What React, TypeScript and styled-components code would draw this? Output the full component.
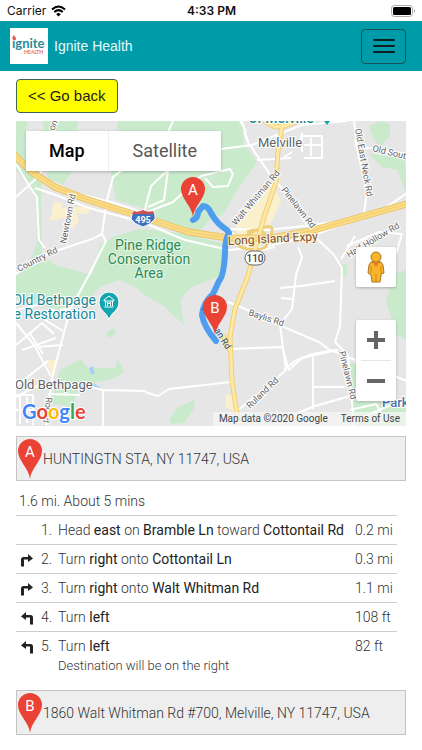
import React from "react";
import styled, { createGlobalStyle } from "styled-components";

const GlobalStyle = createGlobalStyle`
  *, *::before, *::after { box-sizing: border-box; }
  body {
    margin: 0;
    background: #fff;
    color: #333;
    font-family: Roboto, "Noto Sans", sans-serif;
  }
`;

const StatusBar = styled.div`
  display: grid;
  grid-template-columns: 1fr auto 1fr;
  align-items: center;
  height: 21px;
  padding: 0 6px 0 7px;
  color: #111;
  font: 12px/20px Inter, sans-serif;
`;

const Carrier = styled.span`
  display: flex;
  align-items: center;
  gap: 5px;
`;

const Clock = styled.span`
  font-weight: 600;
`;

const Battery = styled.svg`
  justify-self: end;
`;

const Header = styled.header`
  display: flex;
  align-items: center;
  gap: 6px;
  height: 50px;
  padding: 0 16px 0 10px;
  background: #009ba9;
`;

const Brand = styled.a`
  flex: 1;
  display: flex;
  align-items: center;
  gap: 6px;
  color: #e8fbfc;
  font: 14px/20px "Liberation Sans", sans-serif;
  text-decoration: none;
`;

const MenuButton = styled.button`
  display: grid;
  place-items: center;
  width: 45px;
  height: 35px;
  padding: 0;
  border: 1px solid #17525a;
  border-radius: 4px;
  background: transparent;
  cursor: pointer;
`;

const Main = styled.main`
  padding: 8px 16px;
`;

const BackButton = styled.button`
  display: block;
  height: 34px;
  padding: 0 11px;
  border: 1px solid #3f6650;
  border-radius: 4px;
  background: #ff0;
  color: #1c1c1c;
  font: 15px/20px "Liberation Sans", sans-serif;
  cursor: pointer;
`;

const MapFrame = styled.section`
  position: relative;
  height: 305px;
  margin: 8px 0 10px;
  overflow: hidden;
  background: #e6e6e6;
`;

const MapCanvas = styled.svg`
  display: block;
  width: 100%;
  height: 100%;
  font-family: Roboto, sans-serif;
`;

const MapTypes = styled.div`
  position: absolute;
  top: 10px;
  left: 10px;
  display: flex;
  height: 40px;
  background: #fff;
  box-shadow: 0 1px 3px rgba(0, 0, 0, 0.25);
`;

const MapType = styled.button<{ $active?: boolean }>`
  padding: ${(p) => (p.$active ? "0 23px" : "0 24px")};
  border: 0;
  border-left: ${(p) => (p.$active ? "0" : "1px solid #eee")};
  background: transparent;
  color: ${(p) => (p.$active ? "#000" : "#565656")};
  font: ${(p) => (p.$active ? 500 : 400)} 18px/20px Roboto, sans-serif;
  cursor: pointer;
`;

const MapControls = styled.div`
  position: absolute;
  right: 10px;
  bottom: 25px;
  display: flex;
  flex-direction: column;
  gap: 33px;
`;

const ControlGroup = styled.div`
  display: flex;
  flex-direction: column;
  align-items: center;
  width: 40px;
  border-radius: 2px;
  background: #fff;
  box-shadow: 0 1px 3px rgba(0, 0, 0, 0.25);
`;

const ControlButton = styled.button`
  display: grid;
  place-items: center;
  width: 40px;
  height: 40px;
  padding: 0;
  border: 0;
  background: transparent;
  cursor: pointer;
`;

const ControlDivider = styled.span`
  width: 30px;
  height: 1px;
  background: #e6e6e6;
`;

const Attribution = styled.div`
  position: absolute;
  right: 0;
  bottom: 0;
  display: flex;
  gap: 13px;
  padding: 0 6px;
  background: rgba(245, 245, 245, 0.75);
  color: #444;
  font-size: 10px;
  line-height: 14px;
`;

const TermsLink = styled.a`
  color: inherit;
  text-decoration: none;
`;

const Waypoint = styled.div`
  display: flex;
  align-items: center;
  height: 45px;
  border: 1px solid #c4c4c4;
  background: #eee;
  font-size: 14px;
  font-weight: 300;
  line-height: 20px;
`;

const Summary = styled.p`
  margin: 10px 3px 4px;
  font-size: 14px;
  font-weight: 300;
  line-height: 20px;
`;

const Steps = styled.table`
  width: calc(100% - 9px);
  margin-bottom: 10px;
  border-collapse: collapse;
  table-layout: fixed;
  font-size: 14px;
  font-weight: 300;
  line-height: 20px;
`;

const StepRow = styled.tr`
  border-top: 1px solid #cdcdcd;
`;

const Cell = styled.td<{ $width?: number }>`
  width: ${(p) => (p.$width ? `${p.$width}px` : "auto")};
  padding: 4px 0;
  vertical-align: top;
  white-space: nowrap;
`;

const TurnCell = styled(Cell)`
  padding: 9px 0 0 4px;
  line-height: 0;
`;

const Strong = styled.b`
  font-weight: 400;
  color: #222;
`;

const Note = styled.div`
  font-size: 13px;
  line-height: 20px;
`;

function Logo() {
  return (
    <svg width="38" height="36" viewBox="0 0 38 36" role="img" aria-label="Ignite Health logo">
      <rect width="38" height="36" fill="#fff" />
      <text x="2" y="20" fontFamily="Lato, sans-serif" fontWeight="700" fontSize="13" fill="#2b8b98">ıgnite</text>
      <path d="M4.500 12.500C1.500 11.500 2 9.500 4 7c.3 1.200 1.400 1.400 1.800 3 .6 1.400-.3 2.300-1.300 2.500z" fill="#e6594d" />
      <text x="14" y="26" fontFamily="Lato, sans-serif" fontWeight="700" fontSize="5" fill="#e07167">HEALTH</text>
    </svg>
  );
}

function PinShape({ letter }: { letter: string }) {
  return (
    <>
      <path d="M13 41C12 30 1 23 1 13a12 12 0 0 1 24 0c0 10-11 17-12 28z" fill="#ea4335" />
      <text x="13" y="19" textAnchor="middle" fontSize="15" fontWeight="400" fill="#fff">{letter}</text>
    </>
  );
}

function WaypointPin({ letter }: { letter: string }) {
  return (
    <svg width="26" height="42" viewBox="0 0 26 42" aria-hidden="true">
      <PinShape letter={letter} />
    </svg>
  );
}

function TurnIcon({ left }: { left?: boolean }) {
  return (
    <svg width="14" height="13" viewBox="0 0 14 13" aria-hidden="true">
      <g transform={left ? "translate(14 0) scale(-1 1)" : undefined}>
        <path d="M1 12.500V5.500Q1 3 3.500 3H8V0l5 4.500L8 8V5.500H4v7z" fill="#222" />
      </g>
    </svg>
  );
}

const parks = [
  "M16 121H28L24 144 29 165 42 178 41 200 42 255 55 265 92 275 100 245 112 237 140 229 180 233 225 244 222 275 207 281 190 288 180 300 184 325 165 307 145 295 132 285 118 280 100 287 86 302 65 311 16 300V275L33 255 39 235 37 195 16 170Z",
  "M43 121H78L75 152 71 173 63 185 48 178Z",
  "M111 172 118 121H242L244 144 257 162 244 181 234 195 222 216 214 215 200 231 161 221 148 210 116 200Z",
  "M60 370 81 359 88 368 115 368 118 359 124 372 112 379 80 386 72 407 50 403Z",
  "M369 126 380 121 390 124 390 136 380 147 373 138Z",
  "M369 154 405 158 407 195 397 170 382 167Z",
  "M407 270 394 274 386 302 397 335 407 340Z",
  "M345 364H357V402H407V426H354Z",
  "M169 420 178 407 194 400 195 407 184 423 171 424Z",
  "M106 333 113 328 117 333 109 338Z",
  "M342 264H347V276H342Z",
];

const minorRoads = [
  "M16 197 39 176 61 131",
  "M16 164 30 187 37 197 39 240 45 248",
  "M16 274 50 253 92 239 102 234 107 200 113 177 125 168",
  "M102 234 106 241 91 271 70 310 52 378 46 426",
  "M35 188 53 194 89 208 142 222 185 240 229 250 263 247 308 237 347 223 381 211 407 193",
  "M53 183 75 193 111 202 145 213 173 202 201 176 230 169 233 174 228 186 213 187 205 178",
  "M173 121 168 132 M144 213 151 186 168 170 164 200 148 207",
  "M221 149 252 145 302 125 347 121",
  "M250 145 271 176 291 199 312 234 334 255 342 268 340 326 335 342 348 355 354 426",
  "M244 132 249 145 242 121 M240 121 246 131",
  "M257 160 291 158 M287 144H301V136H322V158H304 M302 133V152 M311 138V156 M304 145H322 M284 157 292 152",
  "M354 121 357 148 378 148 407 157",
  "M355 140 367 191 364 213",
  "M229 229 267 230 304 226 350 220",
  "M230 232 240 238 254 252 275 247",
  "M298 247 302 257 296 275 292 309 280 325 286 370 265 389 234 413",
  "M228 302 255 313 286 328 319 342 331 351 338 350",
  "M232 349 282 347 289 370 302 358 333 351 407 381",
  "M284 370 295 361 312 354 335 350",
  "M145 392 158 396 169 389 231 382",
  "M280 288 301 286 335 281 M281 298 293 299",
  "M16 323 34 345 51 376 M16 386 48 361 M16 397 45 382",
  "M16 345 42 323 54 334 M22 350 56 338 M29 332 43 354 M37 347 63 345",
  "M37 315 63 331 M52 309 68 320 M60 310 71 308 M16 310 46 303",
  "M16 395H33V425 M20 395V424 M27 397V423 M16 410H33 M48 394 80 395",
  "M87 386 103 390 145 391 M103 390V426",
  "M313 357V409 M313 387H345 M280 420 315 406 350 396",
  "M350 410 376 404 382 414 M358 419 393 404 407 402",
  "M355 236 341 259 M347 246 379 232 402 234 396 254",
];

const mapLabels = [
  { text: "on", x: 54, y: 131, rotate: -67, size: 9 },
  { text: "Melville", x: 258, y: 147, size: 13 },
  { text: "Newtown Rd", x: 66, y: 244, rotate: -79, size: 9 },
  { text: "Country Rd", x: 19, y: 272, rotate: -27, size: 9 },
  { text: "Walt Whitman Rd", x: 236, y: 226, rotate: -50, size: 9 },
  { text: "Pinelawn Rd", x: 281, y: 190, rotate: 52, size: 9 },
  { text: "Old East Neck Rd", x: 355, y: 129, rotate: 80, size: 9 },
  { text: "Old South", x: 372, y: 151, rotate: 14, size: 9 },
  { text: "Half Hollow Rd", x: 349, y: 258, rotate: -31, size: 9 },
  { text: "Baylis Rd", x: 248, y: 315, rotate: 18, size: 9 },
  { text: "Ruland Rd", x: 250, y: 409, rotate: -44, size: 9 },
  { text: "Pinelawn Rd", x: 339, y: 352, rotate: 76, size: 9 },
  { text: "Old Bethpage", x: 15, y: 389, size: 13 },
  { text: "Round Swamp", x: 46, y: 397, rotate: 96, size: 9 },
];

function RouteMap() {
  return (
    <MapCanvas viewBox="16 121 390 305" preserveAspectRatio="xMidYMid slice" role="img" aria-label="Route map">
      <rect x="-200" y="-100" width="900" height="750" fill="#e6e6e6" />
      <g fill="#c9ebcc">
        {parks.map((d) => <path key={d} d={d} />)}
      </g>
      <g fill="#fbf0ce">
        <path d="M54 201 63 204 61 208 91 206 88 214 77 213 79 221 72 229 64 218 50 221Z" />
        <path d="M45 360H56L54 378Z M226 394 238 399 238 414 225 407Z" />
        <path d="M272 181 244 211 236 225 237 238 260 239 272 221 281 201Z" />
      </g>
      <g fill="#a8cef8">
        <path d="M89 368 93 366 95 374 91 374Z M93 383 101 388 93 388Z" />
      </g>
      <g fill="none" stroke="#fff" strokeWidth="2" strokeLinejoin="round">
        {minorRoads.map((d) => <path key={d} d={d} />)}
      </g>
      <g fill="none" stroke="#efcf75" strokeWidth="5">
        <path d="M264 121 275 127 285 126 298 121" />
        <path d="M283 121 278 151 276 182 264 217 257 242 248 276 235 309 230 337 232 381 239 426" />
        <path d="M247 232Q264 226 267 239T248 249 253 232 269 240" strokeWidth="3" />
        <path d="M223 335 232 355" />
      </g>
      <g fill="none" stroke="#fde9a5" strokeWidth="3">
        <path d="M264 121 275 127 285 126 298 121" />
        <path d="M283 121 278 151 276 182 264 217 257 242 248 276 235 309 230 337 232 381 239 426" />
        <path d="M223 335 232 355" />
      </g>
      <g fill="none">
        <path d="M13 154 33 173 55 187 80 197 110 207 143 217 189 232 228 238 271 238 310 231 350 220 410 203" stroke="#eac368" strokeWidth="7" />
        <path d="M13 154 33 173 55 187 80 197 110 207 143 217 189 232 228 238 271 238 310 231 350 220 410 203" stroke="#fbdc85" strokeWidth="5" />
        <path d="M13 154 33 173 55 187 80 197 110 207 143 217 189 232 228 238 271 238 310 231 350 220 410 203" stroke="#f2cc70" />
      </g>
      <path d="M193 220Q198 218 198 212L203 206Q208 206 211 213 217 224 227 230L229 233Q225 240 225 252 224 276 219 281L213 294Q203 303 202 315 204 327 216 341" fill="none" stroke="#4f9def" strokeWidth="6" strokeLinejoin="round" strokeLinecap="round" />
      <g fill="#5f6368" stroke="#fff" strokeWidth="2" paintOrder="stroke">
        {mapLabels.map((l) => (
          <text key={`${l.text}-${l.x}`} fontSize={l.size} transform={`translate(${l.x} ${l.y}) rotate(${l.rotate ?? 0})`}>{l.text}</text>
        ))}
      </g>
      <text fontSize="9" fill="#24578f" transform="translate(201 308) rotate(59)">Whitman Rd</text>
      <g fill="#2e8955" stroke="#e3f5e5" strokeWidth="2" paintOrder="stroke" fontSize="14" textAnchor="middle">
        <text x="148" y="250">Pine Ridge</text>
        <text x="149" y="264">Conservation</text>
        <text x="149" y="278">Area</text>
      </g>
      <g fill="#188895" stroke="#fff" strokeWidth="2" paintOrder="stroke" fontSize="14">
        <text x="96" y="305" textAnchor="end">Old Bethpage</text>
        <text x="96" y="319" textAnchor="end">Village Restoration</text>
        <text x="249" y="123" fontWeight="500">of Melville</text>
      </g>
      <path d="M109 320C107 312 99 311 99 302a10 10 0 0 1 20 0c0 9-8 10-10 18z" fill="#12a4af" stroke="#fff" strokeWidth="1" />
      <path d="M104 300 109 296 114 300V301H104ZM104.500 307H113.500M105.500 301V306M112.500 301V306M107.500 306V302L109 304 110.500 302V306" fill="none" stroke="#fff" strokeWidth="1" />
      <path d="M324 121 327 125 330 121Z" fill="#12a4af" />
      <text fontSize="12" fill="#7a4c2c" stroke="#fff5d4" strokeWidth="2" paintOrder="stroke" transform="translate(228 245) rotate(-3)">Long Island Expy</text>
      <rect x="245" y="251" width="20" height="14" rx="7" fill="#fff" stroke="#666" />
      <text x="255" y="262" textAnchor="middle" fontSize="10" fontWeight="500" fill="#444">110</text>
      <path d="M134 211Q138 213 143 210 148 213 153 211 156 215 155 219 152 224 143 227 134 224 131 219 131 215 134 211Z" fill="#3d70bd" stroke="#fff" />
      <path d="M134 211Q138 213 143 210 148 213 153 211L154 214H132Z" fill="#cf4d4d" />
      <text x="143" y="223" textAnchor="middle" fontSize="9" fontWeight="700" fill="#fff">495</text>
      <text x="382" y="407" fontSize="13" fill="#4a75ae" stroke="#fff" strokeWidth="2" paintOrder="stroke" fontWeight="500">Park</text>
      <g transform="translate(180 176)"><PinShape letter="A" /></g>
      <g transform="translate(202 294)"><PinShape letter="B" /></g>
      <text x="22" y="419" fontFamily="Lato, sans-serif" fontSize="20" fontWeight="700" stroke="#fff" strokeWidth="2" paintOrder="stroke">
        <tspan fill="#4285f4">G</tspan><tspan fill="#ea4335">o</tspan><tspan fill="#fbbc05">o</tspan><tspan fill="#4285f4">g</tspan><tspan fill="#34a853">l</tspan><tspan fill="#ea4335">e</tspan>
      </text>
    </MapCanvas>
  );
}

function Pegman() {
  return (
    <svg width="20" height="32" viewBox="0 0 20 32" aria-hidden="true">
      <path d="M5 11Q10 9 15 11L17 14 18 22 15 23V25L14 31H6L5 24 2 22 3 14Z" fill="#f9b42b" stroke="#a87625" />
      <circle cx="10" cy="6" r="5" fill="#f9b42b" stroke="#a87625" />
      <path d="M6 11 10 16 14 11Z" fill="#e37e1c" />
      <path d="M10 23V31M5 15V22M15 15V22" stroke="#ca861d" />
    </svg>
  );
}

interface Step {
  turn?: "left" | "right";
  body: React.ReactNode;
  distance: string;
  note?: string;
}

const steps: Step[] = [
  { body: <>Head <Strong>east</Strong> on <Strong>Bramble Ln</Strong> toward <Strong>Cottontail Rd</Strong></>, distance: "0.2 mi" },
  { turn: "right", body: <>Turn <Strong>right</Strong> onto <Strong>Cottontail Ln</Strong></>, distance: "0.3 mi" },
  { turn: "right", body: <>Turn <Strong>right</Strong> onto <Strong>Walt Whitman Rd</Strong></>, distance: "1.1 mi" },
  { turn: "left", body: <>Turn <Strong>left</Strong></>, distance: "108 ft" },
  { turn: "left", body: <>Turn <Strong>left</Strong></>, distance: "82 ft", note: "Destination will be on the right" },
];

export default function App() {
  return (
    <>
      <GlobalStyle />
      <StatusBar>
        <Carrier>
          Carrier
          <svg width="15" height="12" viewBox="0 0 15 12" aria-label="Wi-Fi">
            <path d="M1 4.500Q7.500-1.500 14 4.500M3.300 7Q7.500 3.200 11.700 7" fill="none" stroke="#000" strokeWidth="2" />
            <path d="M5.200 9.200Q7.500 7 9.800 9.200L7.500 11.500Z" />
          </svg>
        </Carrier>
        <Clock>4:33 PM</Clock>
        <Battery width="25" height="12" viewBox="0 0 25 12" aria-label="Battery full">
          <rect x="0.500" y="0.500" width="21" height="11" rx="3" fill="none" stroke="#aaa" />
          <rect x="2" y="2" width="18" height="8" rx="1.500" />
          <path d="M23 4Q25 6 23 8Z" fill="#999" />
        </Battery>
      </StatusBar>
      <Header>
        <Brand href="#"><Logo />Ignite Health</Brand>
        <MenuButton aria-label="Open menu">
          <svg width="24" height="16" viewBox="0 0 24 16" aria-hidden="true">
            <path d="M2 2H22M2 8H22M2 14H22" stroke="#0c2024" strokeWidth="2" strokeLinecap="round" />
          </svg>
        </MenuButton>
      </Header>
      <Main>
        <BackButton>&lt;&lt; Go back</BackButton>
        <MapFrame>
          <RouteMap />
          <MapTypes>
            <MapType $active aria-pressed="true">Map</MapType>
            <MapType aria-pressed="false">Satellite</MapType>
          </MapTypes>
          <MapControls>
            <ControlGroup>
              <ControlButton aria-label="Street View"><Pegman /></ControlButton>
            </ControlGroup>
            <ControlGroup>
              <ControlButton aria-label="Zoom in">
                <svg width="18" height="18" viewBox="0 0 18 18"><path d="M9 0V18M0 9H18" stroke="#666" strokeWidth="4" /></svg>
              </ControlButton>
              <ControlDivider />
              <ControlButton aria-label="Zoom out">
                <svg width="18" height="18" viewBox="0 0 18 18"><path d="M0 9H18" stroke="#666" strokeWidth="4" /></svg>
              </ControlButton>
            </ControlGroup>
          </MapControls>
          <Attribution>
            <span>Map data ©2020 Google</span>
            <TermsLink href="#">Terms of Use</TermsLink>
          </Attribution>
        </MapFrame>
        <Waypoint><WaypointPin letter="A" />HUNTINGTN STA, NY 11747, USA</Waypoint>
        <Summary>1.6 mi. About 5 mins</Summary>
        <Steps>
          <tbody>
            {steps.map((step, i) => (
              <StepRow key={i}>
                <TurnCell $width={25}>{step.turn && <TurnIcon left={step.turn === "left"} />}</TurnCell>
                <Cell $width={17}>{i + 1}.</Cell>
                <Cell>
                  {step.body}
                  {step.note && <Note>{step.note}</Note>}
                </Cell>
                <Cell $width={42}>{step.distance}</Cell>
              </StepRow>
            ))}
          </tbody>
        </Steps>
        <Waypoint><WaypointPin letter="B" />1860 Walt Whitman Rd #700, Melville, NY 11747, USA</Waypoint>
      </Main>
    </>
  );
}
